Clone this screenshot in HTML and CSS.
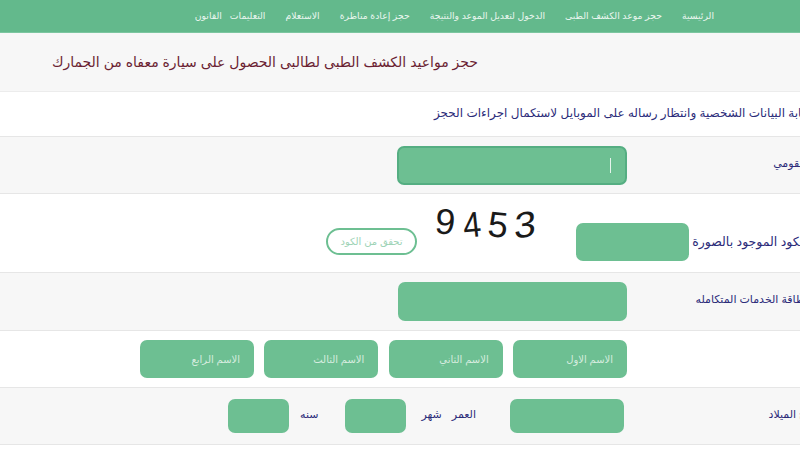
FILE: index.html
```html
<!DOCTYPE html>
<html lang="ar" dir="rtl">
<head>
<meta charset="utf-8">
<title>حجز مواعيد الكشف الطبى</title>
<link rel="stylesheet" href="styles.css">
</head>
<body>
<div class="page">
  <nav class="nav">
    <a>الرئيسية</a>
    <a>حجز موعد الكشف الطبى</a>
    <a>الدخول لتعديل الموعد والنتيجة</a>
    <a>حجز إعادة مناظرة</a>
    <a>الاستعلام</a>
    <a>التعليمات</a>
    <a class="nav-last">القانون</a>
  </nav>
  <header class="title"><h1>حجز مواعيد الكشف الطبى لطالبى الحصول على سيارة معفاه من الجمارك</h1></header>
  <p class="notice">برجاء كتابة البيانات الشخصية وانتظار رساله على الموبايل لاستكمال اجراءات الحجز</p>
  <div class="row row-alt row-id">
    <label class="label">الرقم القومي</label>
    <div class="field field-wide field-focus"><span class="caret"></span></div>
  </div>
  <div class="row row-code">
    <label class="label label-code">الكود الموجود بالصورة</label>
    <div class="field field-code"></div>
    <div class="captcha"><span class="d d1">3</span><span class="d d2">5</span><span class="d d3">4</span><span class="d d4">9</span></div>
    <button class="verify">تحقق من الكود</button>
  </div>
  <div class="row row-alt row-card">
    <label class="label label-card">رقم بطاقة الخدمات المتكامله</label>
    <div class="field field-card"></div>
  </div>
  <div class="row row-names">
    <label class="label"></label>
    <div class="names">
      <div class="field field-name">الاسم الاول</div>
      <div class="field field-name">الاسم الثاني</div>
      <div class="field field-name">الاسم الثالث</div>
      <div class="field field-name">الاسم الرابع</div>
    </div>
  </div>
  <div class="row row-alt row-birth">
    <label class="label label-birth">تاريخ الميلاد</label>
    <div class="field field-date"></div>
    <span class="unit unit-age">العمر</span>
    <span class="unit unit-month">شهر</span>
    <div class="field field-small"></div>
    <span class="unit unit-year">سنه</span>
    <div class="field field-small"></div>
  </div>
</div>
</body>
</html>
```
FILE: styles.css
```css
html, body {
  margin: 0;
  padding: 0;
  background: #fff;
  overflow: hidden;
  width: 800px;
  height: 450px;
}
.page {
  width: 840px;
  margin-left: auto;
  margin-right: -40px;
  font-family: "Liberation Sans", "DejaVu Sans", sans-serif;
  color: #2c2c7a;
  font-size: 11px;
}
.nav {
  height: 33px;
  box-sizing: border-box;
  background: #63b98c;
  border-bottom: 1px solid #7cc6a0;
  display: flex;
  align-items: center;
  gap: 20px;
  padding-right: 126px;
  padding-bottom: 2px;
  font-size: 9.3px;
  color: #eaf6ef;
  white-space: nowrap;
}
.nav-last { margin-right: -12px; }
.title {
  height: 59px;
  box-sizing: border-box;
  background: #f7f7f7;
  border-bottom: 1px solid #ececec;
  display: flex;
  align-items: center;
  padding-right: 362px;
}
.title h1 {
  margin: 0;
  font-size: 14px;
  font-weight: normal;
  color: #6b1f33;
  white-space: nowrap;
}
.notice {
  margin: 0;
  height: 44px;
  box-sizing: border-box;
  display: flex;
  align-items: center;
  font-size: 12px;
  white-space: nowrap;
  padding-right: 0;
  padding-left: 434px;
  padding-bottom: 2px;
  justify-content: flex-end;
}
.row {
  display: flex;
  box-sizing: border-box;
  border-top: 1px solid #e6e6e6;
  white-space: nowrap;
}
.row-alt { background: #f7f7f7; }
.row-id { height: 57px; align-items: center; }
.row-code { height: 79px; align-items: flex-start; }
.row-card { height: 58px; align-items: center; }
.row-names { height: 57px; align-items: center; }
.row-birth { height: 58px; align-items: center; border-bottom: 1px solid #e6e6e6; }
.label {
  width: 213px;
  box-sizing: border-box;
  flex: none;
  padding-right: 6px;
  padding-bottom: 4px;
  font-size: 11px;
}
.label-code {
  width: 151px;
  margin-top: 40px;
  padding: 0 33px 0 0;
  font-size: 12.5px;
}
.label-card { padding-right: 11px; }
.label-birth { padding-right: 19px; }
.field {
  background: #6dbf92;
  border-radius: 7px;
  box-sizing: border-box;
  height: 39px;
  flex: none;
  color: #d5ecdf;
  font-size: 10px;
}
.field-wide { width: 230px; }
.field-card { width: 229px; }
.field-focus {
  border: 2px solid #55ae82;
  display: flex;
  align-items: center;
  padding-right: 14px;
}
.caret {
  width: 1px;
  height: 15px;
  background: #e6f4ec;
}
.field-code {
  width: 113px;
  height: 38px;
  margin-top: 29px;
}
.captcha {
  width: 100px;
  height: 40px;
  margin: 11px 41px 0 18px;
  direction: ltr;
  display: flex;
  flex-direction: row-reverse;
  justify-content: space-between;
  align-items: center;
  font-family: "Liberation Sans", sans-serif;
  font-size: 36px;
  color: #1a1a1a;
}
.d { display: block; line-height: 1; }
.d1 { transform: rotate(-8deg) skewX(-10deg) scaleX(1.1); }
.d2 { transform: rotate(6deg); }
.d3 { transform: rotate(-6deg) scaleX(0.9); }
.d4 { transform: rotate(6deg) translateY(-3px); }
.verify {
  margin: 34px 0 0 0;
  width: 91px;
  height: 27px;
  background: #fff;
  border: 2px solid #6dbf92;
  border-radius: 14px;
  color: #9ed3b6;
  font: inherit;
  font-size: 10px;
  padding: 0;
}
.names {
  display: flex;
  gap: 10.33px;
}
.field-name {
  width: 114px;
  height: 38px;
  display: flex;
  align-items: center;
  padding-right: 14px;
}
.field-date {
  width: 114px;
  height: 34px;
  margin-right: 3px;
}
.field-small {
  width: 61px;
  height: 34px;
}
.unit { flex: none; font-size: 11px; padding-bottom: 4px; }
.unit-age { margin-right: 34px; }
.unit-month { margin-right: 10px; margin-left: 15px; }
.unit-year { margin: 0 27px 0 11px; }
```
